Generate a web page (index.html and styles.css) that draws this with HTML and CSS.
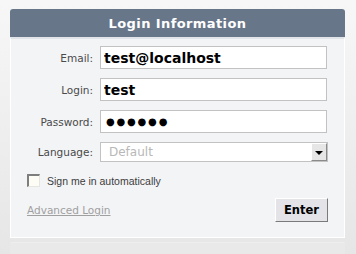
FILE: index.html
```html
<!DOCTYPE html>
<html>
<head>
<meta charset="utf-8">
<link rel="stylesheet" href="styles.css">
</head>
<body>
<div class="page">
  <div class="panel">
    <div class="header">Login Information</div>
    <div class="body">
      <div class="fields">
        <label class="lbl">Email:</label>
        <input class="field" type="text" value="test@localhost">
        <label class="lbl">Login:</label>
        <input class="field" type="text" value="test">
        <label class="lbl">Password:</label>
        <input class="field pw" type="text" value="●●●●●●">
        <label class="lbl">Language:</label>
        <div class="select"><span class="sel-text">Default</span><span class="sel-btn"><span class="tri"></span></span></div>
      </div>
      <div class="check-row"><span class="checkbox"></span><span class="check-label">Sign me in automatically</span></div>
      <div class="foot-row">
        <a class="adv" href="#">Advanced Login</a>
        <button class="enter">Enter</button>
      </div>
    </div>
  </div>
  <div class="below"></div>
</div>
</body>
</html>
```
FILE: styles.css
```css
html, body { margin: 0; padding: 0; }
body {
  width: 356px;
  height: 254px;
  overflow: hidden;
  background: linear-gradient(#f7f7f7, #e6e6e6);
  font-family: "Liberation Sans", Arial, sans-serif;
}
.page { padding: 9px 11px 0 10px; }
.panel { width: 335px; }
.header {
  height: 28px;
  line-height: 29px;
  background: #687689;
  color: #fff;
  text-align: center;
  font-family: "DejaVu Sans", sans-serif;
  font-weight: bold;
  font-size: 13px;
  letter-spacing: 0.4px;
  border-radius: 3px 3px 0 0;
}
.body {
  background: #f3f4f6;
  border-top: 2px solid #e1e4e8;
  border-left: 1px solid #fff;
  border-right: 1px solid #fff;
  border-bottom: 1px solid #fff;
  padding: 7px 0 15px 0;
}
.fields {
  display: grid;
  grid-template-columns: 82px 227px;
  column-gap: 7px;
  row-gap: 9px;
  align-items: center;
}
.lbl {
  text-align: right;
  font-family: "DejaVu Sans", sans-serif;
  font-size: 10.5px;
  color: #4a4a4a;
}
.field {
  box-sizing: border-box;
  height: 23px;
  width: 227px;
  margin: 0;
  border: 1px solid #c2c2c2;
  background: #fff;
  padding: 0 0 0 3px;
  font-family: "DejaVu Sans", sans-serif;
  font-weight: bold;
  font-size: 14px;
  color: #000;
  outline: none;
}
.field.pw {
  font-weight: normal;
  font-size: 10px;
  letter-spacing: 1.8px;
  padding-left: 5px;
}
.select {
  box-sizing: border-box;
  height: 20px;
  width: 228px;
  border: 1px solid #c2c2c2;
  background: #fff;
  display: flex;
  align-items: center;
  justify-content: space-between;
}
.sel-text {
  font-family: "DejaVu Sans", sans-serif;
  font-size: 12px;
  color: #b8b8b8;
  padding-left: 8px;
}
.sel-btn {
  box-sizing: border-box;
  width: 16px;
  height: 18px;
  background: #e6e6e6;
  border-top: 1px solid #fff;
  border-left: 1px solid #fff;
  border-right: 1px solid #8a8a8a;
  border-bottom: 1px solid #8a8a8a;
  display: flex;
  align-items: center;
  justify-content: center;
}
.tri {
  width: 0;
  height: 0;
  border-left: 4px solid transparent;
  border-right: 4px solid transparent;
  border-top: 4px solid #000;
  margin-top: 1px;
}
.check-row {
  display: flex;
  align-items: center;
  gap: 7px;
  margin-top: 12px;
  padding-left: 16px;
}
.checkbox {
  box-sizing: border-box;
  width: 13px;
  height: 13px;
  background: #fdfdf6;
  border-top: 2px solid #7e7e7e;
  border-left: 2px solid #7e7e7e;
  border-right: 1px solid #e6e6e0;
  border-bottom: 1px solid #e6e6e0;
}
.check-label {
  font-size: 10.5px;
  color: #3c3c3c;
}
.foot-row {
  display: flex;
  align-items: center;
  justify-content: space-between;
  margin-top: 11px;
  padding-left: 16px;
  padding-right: 16px;
}
.adv {
  font-family: "DejaVu Sans", sans-serif;
  font-size: 10.5px;
  color: #a0a0a0;
  text-decoration: underline;
}
.enter {
  box-sizing: border-box;
  width: 53px;
  height: 24px;
  margin: 0;
  padding: 0;
  background: #e4e4e8;
  border-top: 1px solid #fff;
  border-left: 1px solid #fff;
  border-right: 1px solid #7a7a7a;
  border-bottom: 1px solid #7a7a7a;
  font-family: "DejaVu Sans", sans-serif;
  font-weight: bold;
  font-size: 11.5px;
  color: #000;
}
.below {
  margin-top: 4px;
  width: 335px;
  height: 20px;
  background: #e9e9e9;
  border-top: 1px solid #eeeeee;
  border-radius: 2px 2px 0 0;
}
```
